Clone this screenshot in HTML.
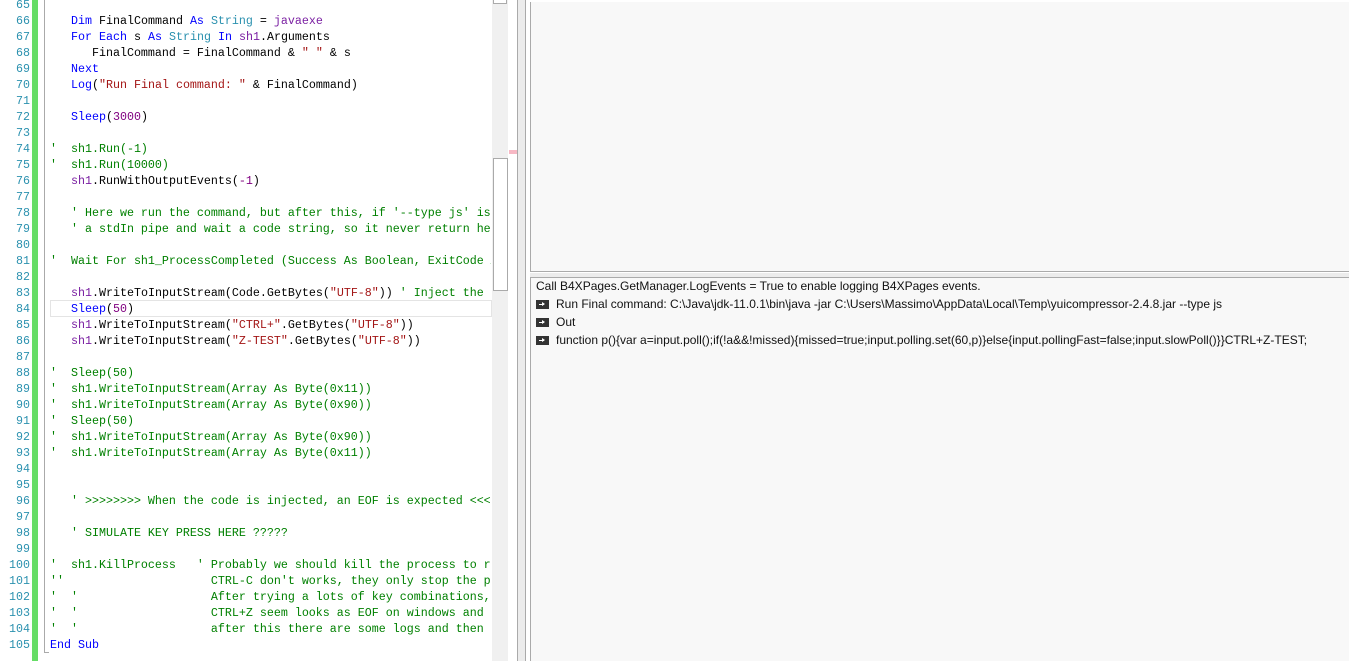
<!DOCTYPE html>
<html><head><meta charset="utf-8"><style>
body{margin:0;width:1351px;height:661px;overflow:hidden;background:#fff;position:relative;font-family:"Liberation Sans",sans-serif}
.ln{position:absolute;left:0;width:30px;text-align:right;font:11.67px/16px "Liberation Mono",monospace;color:#2b91af;white-space:pre}
.code{position:absolute;left:50px;font:11.67px/16px "Liberation Mono",monospace;color:#000;white-space:pre;width:441px;overflow:hidden}
.k{color:#0000ff}.t{color:#2b91af}.s{color:#a31515}.n{color:#800080}.c{color:#008000}.p{color:#7a1fa2}
.log{position:absolute;left:536px;font-size:12px;line-height:18px;color:#111;white-space:pre}
.ar{display:inline-block;width:13px;height:9px;background:#333;vertical-align:-1px;margin-right:7px;position:relative}
.ar:after{content:"";position:absolute;left:3px;top:4px;width:5px;height:1px;background:#fff}
.ar:before{content:"";position:absolute;left:6px;top:2px;border-left:3px solid #fff;border-top:2.5px solid transparent;border-bottom:2.5px solid transparent}
</style></head><body>
<div style="position:absolute;left:32px;top:0;width:6px;height:661px;background:#66dd66"></div>
<div style="position:absolute;left:44px;top:0;width:1px;height:653px;background:#aaa"></div>
<div style="position:absolute;left:44px;top:652px;width:5px;height:1px;background:#aaa"></div>
<div style="position:absolute;left:50px;top:300px;width:440px;height:15px;border:1px solid #e4e4e4"></div>
<div class="ln" style="top:-3px">65
66
67
68
69
70
71
72
73
74
75
76
77
78
79
80
81
82
83
84
85
86
87
88
89
90
91
92
93
94
95
96
97
98
99
100
101
102
103
104
105</div>
<div class="code" style="top:-3px">
   <span class="k">Dim</span> FinalCommand <span class="k">As</span> <span class="t">String</span> = <span class="p">javaexe</span>
   <span class="k">For Each</span> s <span class="k">As</span> <span class="t">String</span> <span class="k">In</span> <span class="p">sh1</span>.Arguments
      FinalCommand = FinalCommand &amp; <span class="s">" "</span> &amp; s
   <span class="k">Next</span>
   <span class="k">Log</span>(<span class="s">"Run Final command: "</span> &amp; FinalCommand)

   <span class="k">Sleep</span>(<span class="n">3000</span>)

<span class="c">'  sh1.Run(-1)</span>
<span class="c">'  sh1.Run(10000)</span>
   <span class="p">sh1</span>.RunWithOutputEvents(<span class="n">-1</span>)

<span class="c">   ' Here we run the command, but after this, if '--type js' is</span>
<span class="c">   ' a stdIn pipe and wait a code string, so it never return he</span>

<span class="c">'  Wait For sh1_ProcessCompleted (Success As Boolean, ExitCode As</span>

   <span class="p">sh1</span>.WriteToInputStream(Code.GetBytes(<span class="s">"UTF-8"</span>)) <span class="c">' Inject the code</span>
   <span class="k">Sleep</span>(<span class="n">50</span>)
   <span class="p">sh1</span>.WriteToInputStream(<span class="s">"CTRL+"</span>.GetBytes(<span class="s">"UTF-8"</span>))
   <span class="p">sh1</span>.WriteToInputStream(<span class="s">"Z-TEST"</span>.GetBytes(<span class="s">"UTF-8"</span>))

<span class="c">'  Sleep(50)</span>
<span class="c">'  sh1.WriteToInputStream(Array As Byte(0x11))</span>
<span class="c">'  sh1.WriteToInputStream(Array As Byte(0x90))</span>
<span class="c">'  Sleep(50)</span>
<span class="c">'  sh1.WriteToInputStream(Array As Byte(0x90))</span>
<span class="c">'  sh1.WriteToInputStream(Array As Byte(0x11))</span>


<span class="c">   ' &gt;&gt;&gt;&gt;&gt;&gt;&gt;&gt; When the code is injected, an EOF is expected &lt;&lt;&lt;&lt;</span>

<span class="c">   ' SIMULATE KEY PRESS HERE ?????</span>

<span class="c">'  sh1.KillProcess   ' Probably we should kill the process to re</span>
<span class="c">''                     CTRL-C don't works, they only stop the pr</span>
<span class="c">'  '                   After trying a lots of key combinations, </span>
<span class="c">'  '                   CTRL+Z seem looks as EOF on windows and o</span>
<span class="c">'  '                   after this there are some logs and then t</span>
<span class="k">End Sub</span></div>
<div style="position:absolute;left:492px;top:0;width:16px;height:661px;background:#f0f0f0"></div>
<div style="position:absolute;left:493px;top:0;width:14px;height:4px;background:#fff;border:1px solid #aaa;border-top:none;box-sizing:border-box"></div>
<div style="position:absolute;left:493px;top:158px;width:15px;height:133px;background:#fff;border:1px solid #aaa;box-sizing:border-box"></div>
<div style="position:absolute;left:509px;top:150px;width:8px;height:4px;background:#f7b8c4"></div>
<div style="position:absolute;left:517px;top:0;width:1px;height:661px;background:#aaa"></div>
<div style="position:absolute;left:518px;top:0;width:7px;height:661px;background:#ececec"></div>
<div style="position:absolute;left:525px;top:0;width:1px;height:661px;background:#aaa"></div>
<div style="position:absolute;left:530px;top:2px;width:819px;height:270px;background:#f8f8f8;border-left:1px solid #aaa;border-bottom:1px solid #aaa;box-sizing:border-box"></div>
<div style="position:absolute;left:530px;top:273px;width:819px;height:4px;background:#ececec;border-bottom:1px solid #aaa"></div>
<div style="position:absolute;left:530px;top:278px;width:819px;height:383px;background:#f8f8f8;border-left:1px solid #aaa;box-sizing:border-box"></div>
<div class="log" style="top:277px">Call B4XPages.GetManager.LogEvents = True to enable logging B4XPages events.</div>
<div class="log" style="top:295px"><span class="ar"></span>Run Final command: C:\Java\jdk-11.0.1\bin\java -jar C:\Users\Massimo\AppData\Local\Temp\yuicompressor-2.4.8.jar --type js</div>
<div class="log" style="top:313px"><span class="ar"></span>Out</div>
<div class="log" style="top:331px"><span class="ar"></span>function p(){var a=input.poll();if(!a&amp;&amp;!missed){missed=true;input.polling.set(60,p)}else{input.pollingFast=false;input.slowPoll()}}CTRL+Z-TEST;</div>
</body></html>
